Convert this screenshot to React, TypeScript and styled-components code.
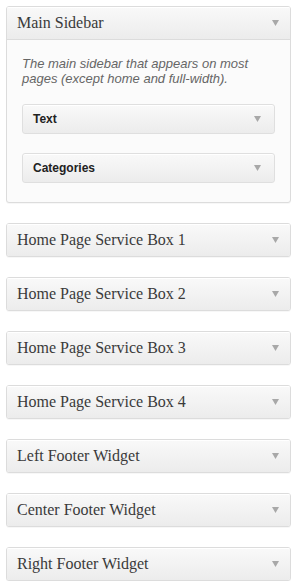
import React from 'react';
import styled, { createGlobalStyle } from 'styled-components';

const GlobalStyle = createGlobalStyle`
  html, body {
    margin: 0;
    padding: 0;
    background: #fff;
  }
  body {
    font-family: 'Liberation Sans', Arial, sans-serif;
  }
`;

interface Sidebar {
  title: string;
  description?: string;
  widgets?: string[];
}

const sidebars: Sidebar[] = [
  {
    title: 'Main Sidebar',
    description: 'The main sidebar that appears on most pages (except home and full-width).',
    widgets: ['Text', 'Categories'],
  },
  { title: 'Home Page Service Box 1' },
  { title: 'Home Page Service Box 2' },
  { title: 'Home Page Service Box 3' },
  { title: 'Home Page Service Box 4' },
  { title: 'Left Footer Widget' },
  { title: 'Center Footer Widget' },
  { title: 'Right Footer Widget' },
];

function Arrow() {
  return (
    <ArrowIcon width="7" height="6" viewBox="0 0 7 6">
      <path d="M0 0 L7 0 L3.5 6 Z" fill="#a8a8a8" />
    </ArrowIcon>
  );
}

export default function App() {
  return (
    <>
      <GlobalStyle />
      <Column>
        {sidebars.map((s) => (
          <Box key={s.title}>
            <BoxHeader open={!!s.widgets}>
              <BoxTitle>{s.title}</BoxTitle>
              <Arrow />
            </BoxHeader>
            {s.widgets && (
              <BoxBody>
                {s.description && <Description>{s.description}</Description>}
                {s.widgets.map((w) => (
                  <Widget key={w}>
                    <WidgetTitle>{w}</WidgetTitle>
                    <Arrow />
                  </Widget>
                ))}
              </BoxBody>
            )}
          </Box>
        ))}
      </Column>
    </>
  );
}

const Column = styled.div`
  display: flex;
  flex-direction: column;
  gap: 20px;
  width: 285px;
  padding: 6px 0 0 6px;
`;

const Box = styled.div`
  border: 1px solid #dcdcdc;
  border-radius: 3px;
  background: #fbfbfb;
  overflow: hidden;
  box-shadow: 0 1px 0 rgba(0, 0, 0, 0.03);
`;

const BoxHeader = styled.div<{ open: boolean }>`
  display: flex;
  align-items: center;
  justify-content: space-between;
  height: 32px;
  padding: 0 11px 0 10px;
  background: linear-gradient(to bottom, #f9f9f9, #ececec);
  border-bottom: ${({ open }) => (open ? '1px solid #dcdcdc' : 'none')};
  box-shadow: inset 0 1px 0 #fff;
`;

const BoxTitle = styled.span`
  font-family: 'Liberation Serif', 'DejaVu Serif', serif;
  font-size: 16px;
  color: #3a3a3a;
`;

const ArrowIcon = styled.svg`
  display: block;
  flex-shrink: 0;
`;

const BoxBody = styled.div`
  display: flex;
  flex-direction: column;
  gap: 19px;
  padding: 16px 15px 19px 15px;
`;

const Description = styled.p`
  margin: 0 0 -1px 0;
  font-style: italic;
  font-size: 13px;
  line-height: 15px;
  color: #666;
`;

const Widget = styled.div`
  display: flex;
  align-items: center;
  justify-content: space-between;
  height: 28px;
  padding: 0 13px 0 10px;
  border: 1px solid #dfdfdf;
  border-radius: 3px;
  background: linear-gradient(to bottom, #f9f9f9, #ececec);
  box-shadow: inset 0 1px 0 #fff;
`;

const WidgetTitle = styled.span`
  font-weight: bold;
  font-size: 12px;
  color: #222;
`;
